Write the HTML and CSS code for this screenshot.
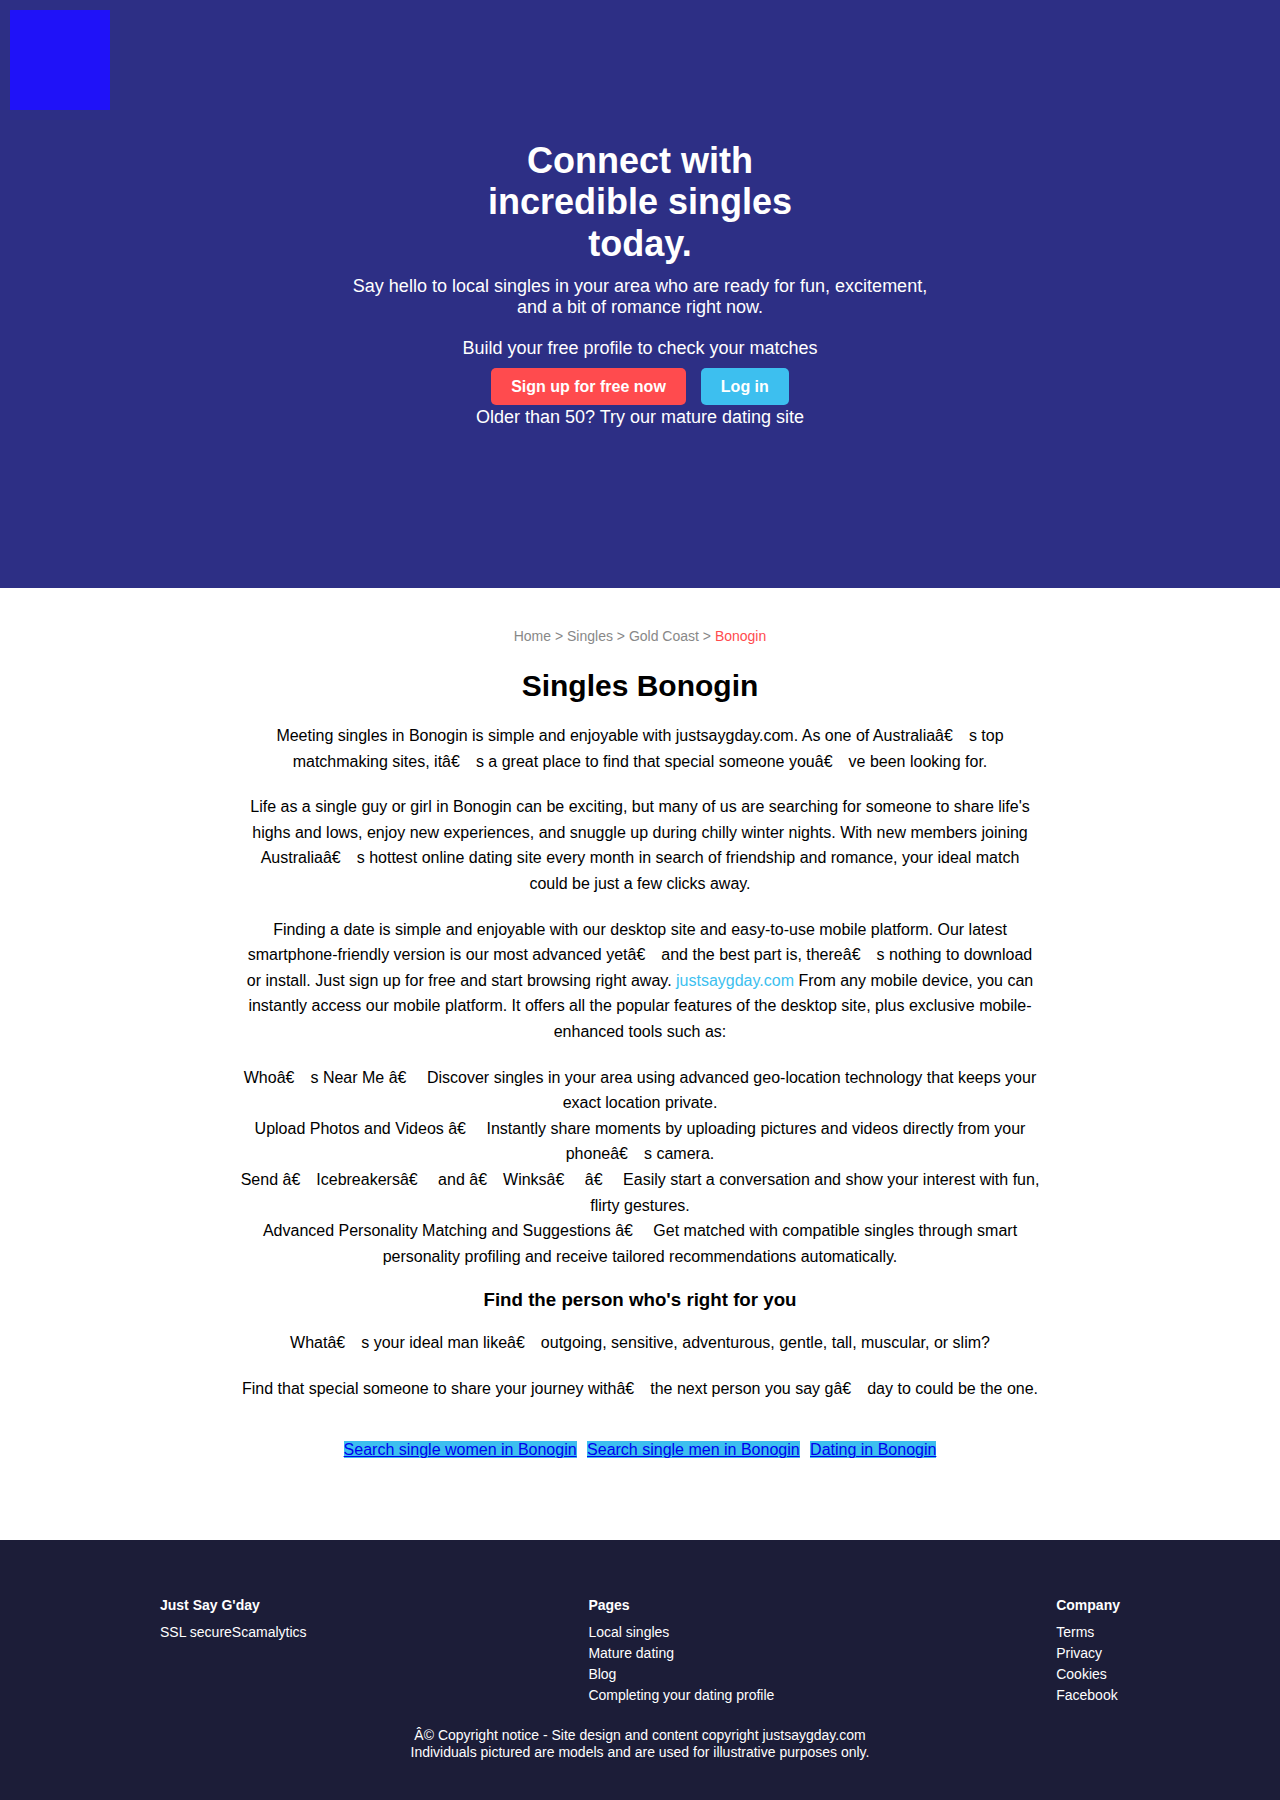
FILE: index.html
```html
<!DOCTYPE html>
<html lang="en">
<head>
<meta charset="utf-8">
<title>Singles Bonogin</title>
<link rel="stylesheet" href="styles.css">
</head>
<body>
<header class="hero">
  <div class="hero-logo"></div>
  <h1 class="hero-title">Connect with incredible singles today.</h1>
  <p class="hero-sub">Say hello to local singles in your area who are ready for fun, excitement, and a bit of romance right now.</p>
  <p class="hero-build">Build your free profile to check your matches</p>
  <div class="hero-actions">
    <a class="btn btn-red" href="#">Sign up for free now</a>
    <a class="btn btn-blue" href="#">Log in</a>
  </div>
  <p class="hero-older">Older than 50? Try our mature dating site</p>
</header>

<main class="content">
  <p class="breadcrumb">Home &gt; Singles &gt; Gold Coast &gt; <span class="current">Bonogin</span></p>
  <h1 class="page-title">Singles Bonogin</h1>
  <p>Meeting singles in Bonogin is simple and enjoyable with justsaygday.com. As one of Australiaâ€<span class="mj"></span>s top matchmaking sites, itâ€<span class="mj"></span>s a great place to find that special someone youâ€<span class="mj"></span>ve been looking for.</p>
  <p>Life as a single guy or girl in Bonogin can be exciting, but many of us are searching for someone to share life's highs and lows, enjoy new experiences, and snuggle up during chilly winter nights. With new members joining Australiaâ€<span class="mj"></span>s hottest online dating site every month in search of friendship and romance, your ideal match could be just a few clicks away.</p>
  <p>Finding a date is simple and enjoyable with our desktop site and easy-to-use mobile platform. Our latest smartphone-friendly version is our most advanced yetâ€<span class="mj"></span>and the best part is, thereâ€<span class="mj"></span>s nothing to download or install. Just sign up for free and start browsing right away. <a class="inline-link" href="#">justsaygday.com</a> From any mobile device, you can instantly access our mobile platform. It offers all the popular features of the desktop site, plus exclusive mobile-enhanced tools such as:</p>
  <ul class="features">
    <li>Whoâ€<span class="mj"></span>s Near Me â€<span class="mj"></span> Discover singles in your area using advanced geo-location technology that keeps your exact location private.</li>
    <li>Upload Photos and Videos â€<span class="mj"></span> Instantly share moments by uploading pictures and videos directly from your phoneâ€<span class="mj"></span>s camera.</li>
    <li>Send â€<span class="mj"></span>Icebreakersâ€<span class="mj"></span> and â€<span class="mj"></span>Winksâ€<span class="mj"></span> â€<span class="mj"></span> Easily start a conversation and show your interest with fun, flirty gestures.</li>
    <li>Advanced Personality Matching and Suggestions â€<span class="mj"></span> Get matched with compatible singles through smart personality profiling and receive tailored recommendations automatically.</li>
  </ul>
  <h3 class="sub-title">Find the person who's right for you</h3>
  <p>Whatâ€<span class="mj"></span>s your ideal man likeâ€<span class="mj"></span>outgoing, sensitive, adventurous, gentle, tall, muscular, or slim?</p>
  <p>Find that special someone to share your journey withâ€<span class="mj"></span>the next person you say gâ€<span class="mj"></span>day to could be the one.</p>
  <div class="search-links">
    <a href="#">Search single women in Bonogin</a>
    <a href="#">Search single men in Bonogin</a>
    <a href="#">Dating in Bonogin</a>
  </div>
</main>

<footer class="footer">
  <div class="footer-cols">
    <div class="footer-col">
      <h4>Just Say G'day</h4>
      <ul><li>SSL secureScamalytics</li></ul>
    </div>
    <div class="footer-col">
      <h4>Pages</h4>
      <ul>
        <li><a href="#">Local singles</a></li>
        <li><a href="#">Mature dating</a></li>
        <li><a href="#">Blog</a></li>
        <li><a href="#">Completing your dating profile</a></li>
      </ul>
    </div>
    <div class="footer-col">
      <h4>Company</h4>
      <ul>
        <li><a href="#">Terms</a></li>
        <li><a href="#">Privacy</a></li>
        <li><a href="#">Cookies</a></li>
        <li><a href="#">Facebook</a></li>
      </ul>
    </div>
  </div>
  <p class="copyright">Â© Copyright notice - Site design and content copyright justsaygday.com<br>Individuals pictured are models and are used for illustrative purposes only.</p>
</footer>
</body>
</html>
```

FILE: styles.css
```css
body {
  margin: 0;
  font-family: "Liberation Sans", Arial, sans-serif;
  background: #fff;
}

.hero {
  position: relative;
  background: #2d2f85;
  color: #fff;
  height: 588px;
  box-sizing: border-box;
  padding-top: 140px;
  text-align: center;
}

.hero-logo {
  position: absolute;
  left: 10px;
  top: 10px;
  width: 100px;
  height: 100px;
  background: #1f12f8;
}

.hero-title {
  font-size: 36px;
  line-height: 1.15;
  font-weight: bold;
  max-width: 360px;
  margin: 0 auto 12px;
}

.hero-sub {
  font-size: 18px;
  max-width: 600px;
  margin: 0 auto;
}

.hero-build {
  font-size: 18px;
  margin: 20px 0 0;
}

.hero-actions {
  font-size: 18px;
  line-height: 27px;
  margin-top: 14px;
}

.btn {
  padding: 10px 20px;
  margin: 0 5px;
  border-radius: 5px;
  color: #fff;
  font-weight: bold;
  font-size: 16px;
  text-decoration: none;
}

.btn-red {
  background: #ff4b4e;
}

.btn-blue {
  background: #3dbfef;
}

.hero-older {
  font-size: 18px;
  margin: 7px 0 0;
}

.content {
  max-width: 800px;
  margin: 0 auto;
  padding: 40px 0 77px;
  text-align: center;
  color: #000;
}

.content .breadcrumb {
  font-size: 14px;
  line-height: normal;
  color: #888;
  margin: 0;
}

.breadcrumb .current {
  color: #ff4b4e;
}

.page-title {
  font-size: 30px;
  line-height: normal;
  margin: 25px 0 20px;
}

.content p,
.features li {
  font-size: 16px;
  line-height: 1.6;
}

.content p {
  margin: 0 0 20px;
}

.mj {
  margin-right: 1em;
}

.inline-link {
  color: #3dbfef;
  text-decoration: none;
}

.features {
  list-style: none;
  padding: 0;
  margin: 0 0 20px;
}

.sub-title {
  font-size: 18.72px;
  line-height: normal;
  margin: 20px 0 19px;
}

.search-links {
  margin-top: 36px;
  font-size: 16px;
  line-height: 1.6;
}

.search-links a {
  background: #3dbfef;
  color: #0000ee;
  text-decoration: underline;
  margin: 0 3px;
}

.footer {
  background: #1c1d38;
  color: #fff;
  padding: 57px 0 40px;
  font-size: 14px;
}

.footer-cols {
  max-width: 960px;
  margin: 0 auto;
  display: flex;
  justify-content: space-between;
}

.footer-col h4 {
  font-size: 14px;
  line-height: normal;
  margin: 0 0 9px;
}

.footer-col ul {
  list-style: none;
  margin: 0;
  padding: 0;
  line-height: 21px;
}

.footer-col a {
  color: #fff;
  text-decoration: none;
}

.copyright {
  text-align: center;
  margin: 21px 0 0;
  line-height: 17px;
}
```
